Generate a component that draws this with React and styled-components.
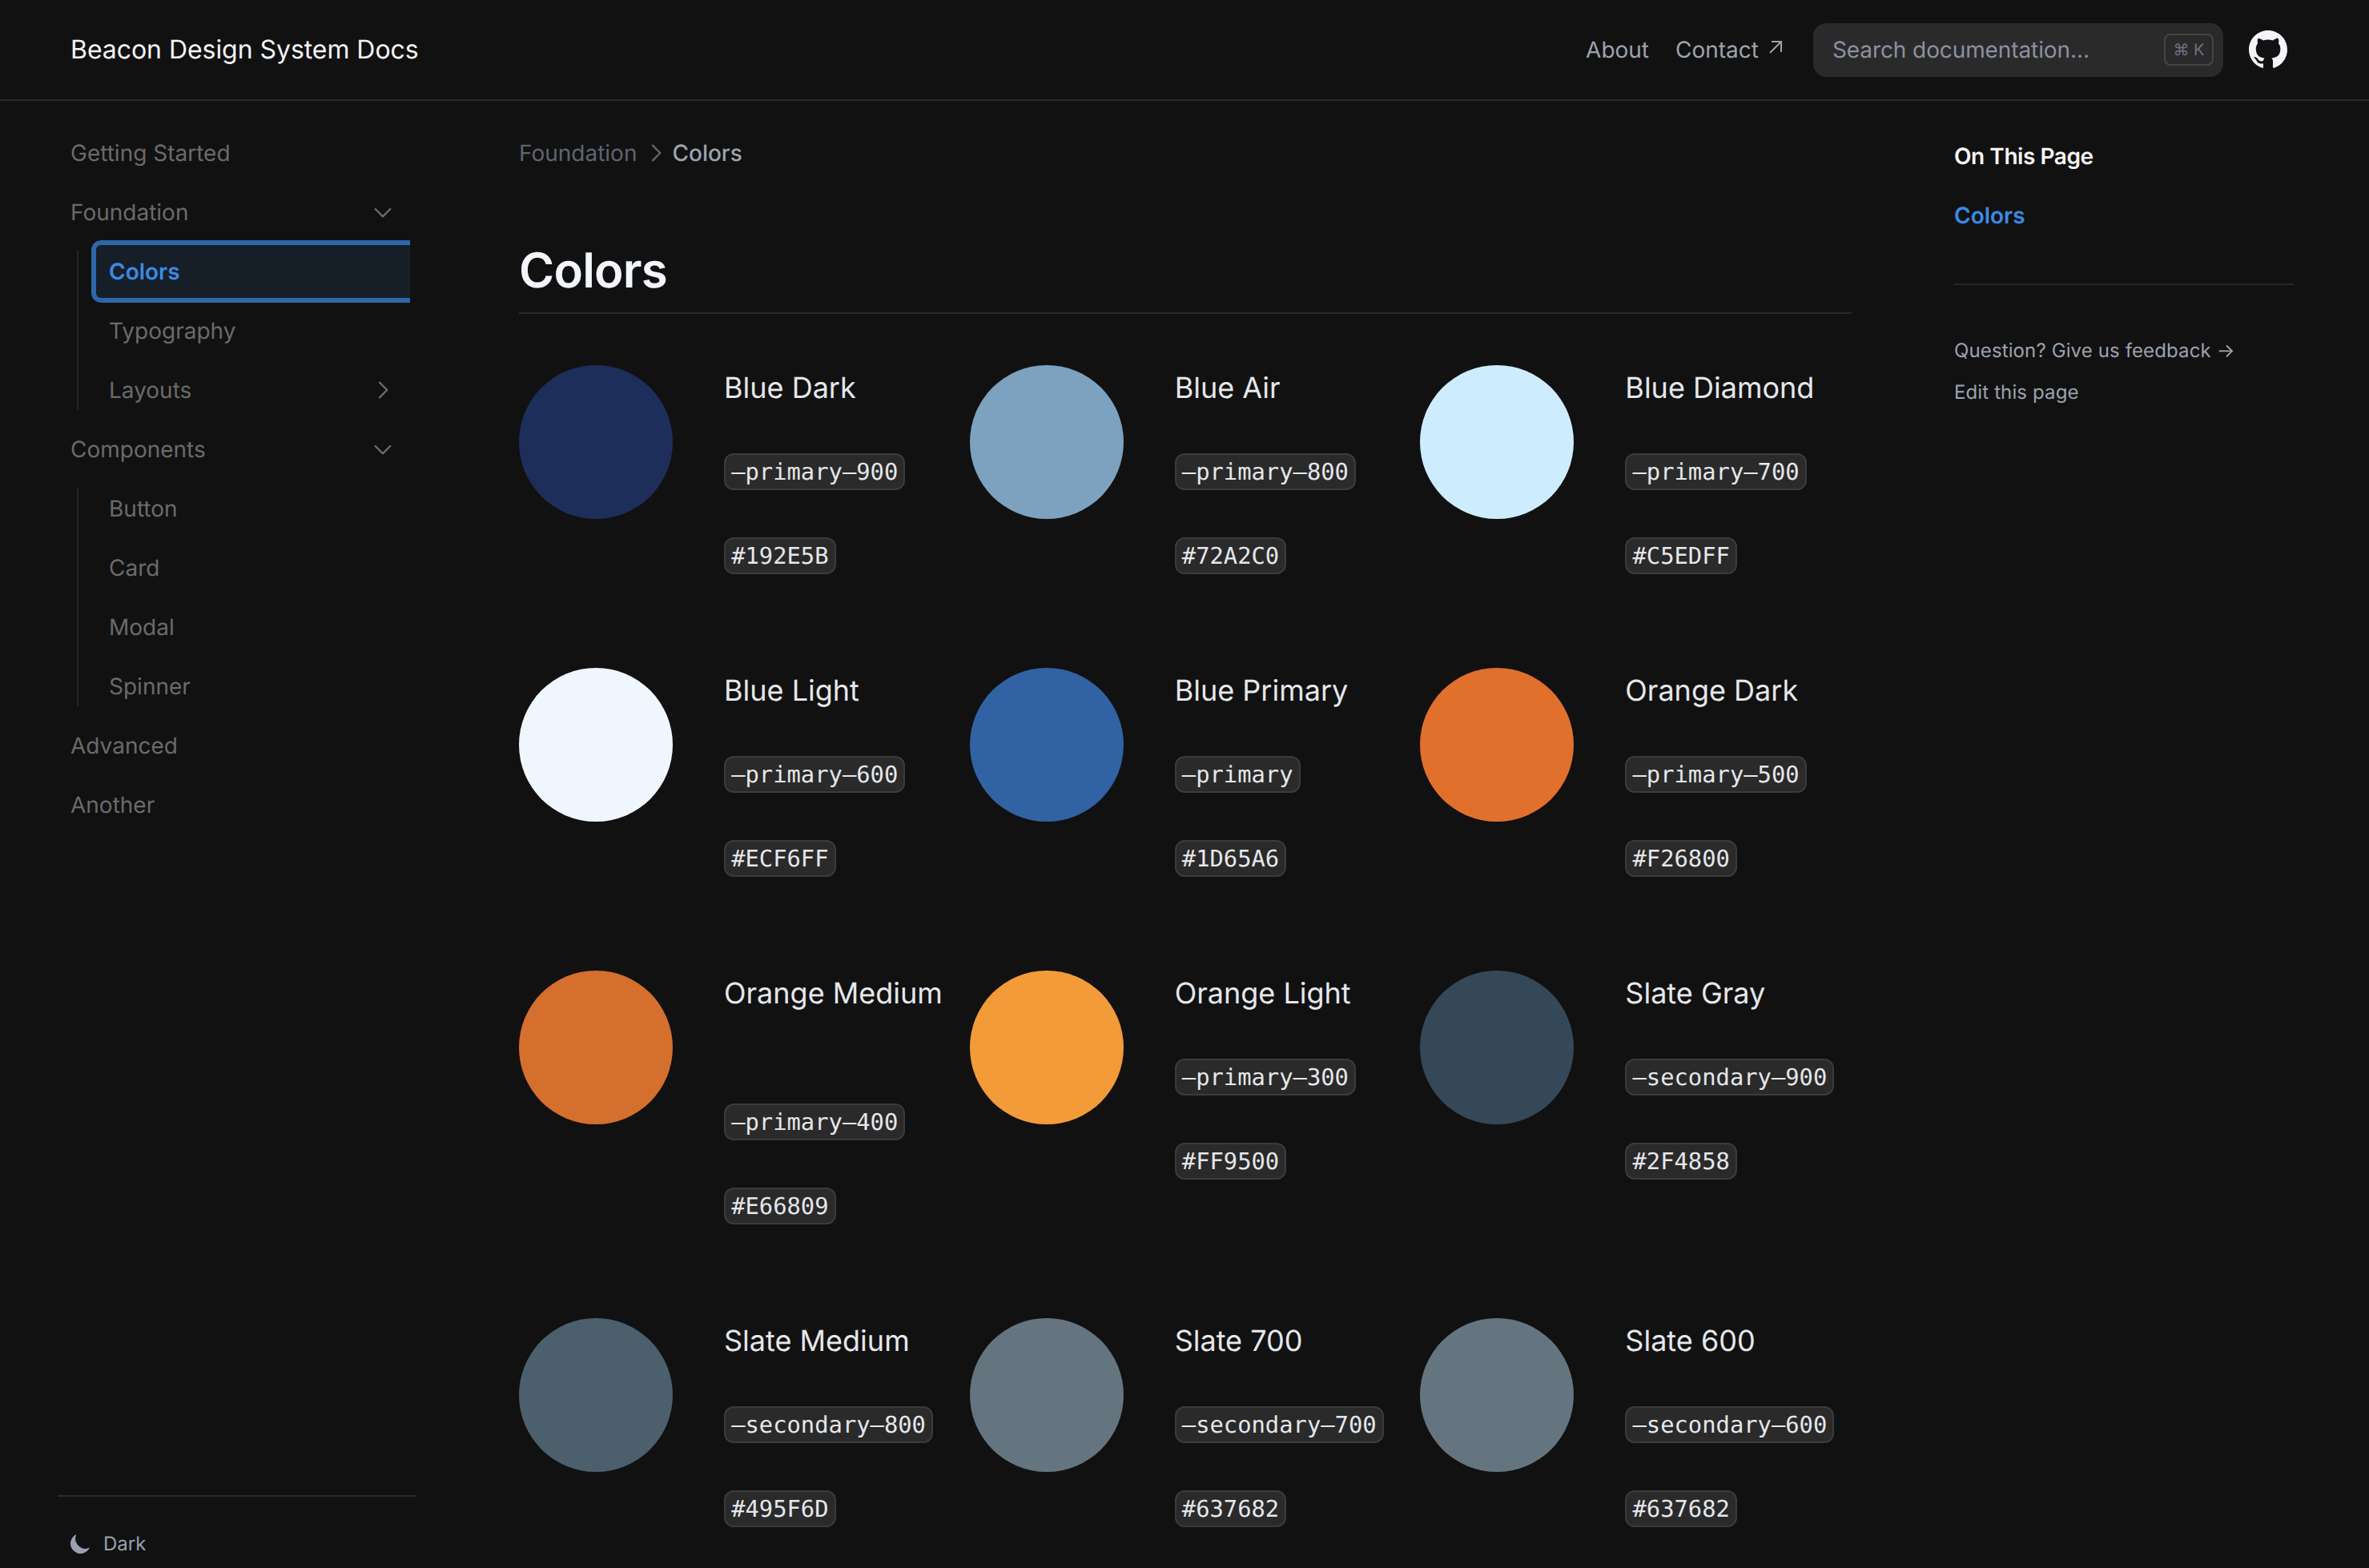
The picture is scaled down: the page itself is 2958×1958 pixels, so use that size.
import React from "react";
import styled, { createGlobalStyle } from "styled-components";

const Global = createGlobalStyle`
  html, body { margin: 0; padding: 0; background: #111111; }
  body { font-family: Inter, "Noto Sans", sans-serif; color: #e5e7eb; text-rendering: geometricPrecision; }
  * { box-sizing: border-box; }
`;
const Page = styled.div`
  height: 1958px; width: 2958px; overflow: hidden; display: flex; flex-direction: column; background: #111111;
`;
const Header = styled.header`
  height: 126px; flex: none; border-bottom: 2px solid #2a2a2a; display: flex; align-items: center;
  padding: 0 102px 0 88px;
`;
const Logo = styled.div`
  font-size: 32px; font-weight: 400; color: #f3f4f6; margin-right: auto; line-height: 48px; letter-spacing: -0.05px;
`;
const TopLink = styled.a`
  font-size: 28px; color: #9ca3af; line-height: 40px; display: flex; align-items: center; margin-right: ${p => p.$mr}px;
`;
const ExternalArrow = styled.svg`
  width: 20px; height: 20px; margin-left: 11px; margin-top: -6px; flex: none;
`;
const Search = styled.div`
  width: 512px; height: 67px; background: #2a2a2a; border-radius: 16px; display: flex; align-items: center;
  padding: 0 12px 0 24px; margin-right: 32px;
`;
const Placeholder = styled.span`
  font-size: 28px; color: #8b90a0; flex: 1; letter-spacing: -0.1px;
`;
const Kbd = styled.kbd`
  width: 62px; height: 40px; border: 2px solid #454545; border-radius: 8px; display: flex; align-items: center;
  justify-content: center; font-family: Inter, "DejaVu Sans", sans-serif; font-size: 20px; color: #6b7280;
`;
const GithubMark = styled.svg`
  width: 48px; height: 48px; flex: none; fill: #f3f5f8;
`;
const Body = styled.div`
  flex: 1; display: flex; min-height: 0;
`;
const Sidebar = styled.aside`
  width: 560px; flex: none; display: flex; flex-direction: column; padding: 32px 40px 0 72px;
`;
const Nav = styled.nav`
  display: flex; flex-direction: column; gap: 8px; flex: 1;
`;
const Row = styled.div`
  height: 66px; flex: none; display: flex; align-items: center; justify-content: space-between;
  padding: 0 26px 0 16px; font-size: 28px; color: #6a6a6a;
`;
const Chevron = styled.svg`
  width: 32px; height: 32px; flex: none; fill: none; stroke: ${p => p.$color || "#6a6a6a"}; stroke-width: 1.8;
  stroke-linecap: round; stroke-linejoin: round; transform: rotate(${p => (p.$down ? 90 : 0)}deg);
`;
const SubList = styled.div`
  position: relative; display: flex; flex-direction: column; gap: 8px; padding-left: 48px;
  &::before {
    content: ""; position: absolute; left: 24px; top: 7px; bottom: 8px; width: 2px; background: #262626;
  }
`;
const SubRow = styled(Row)`
  ${p => p.$active && `
    background: #161e28; color: #3b8ae4; font-weight: 600; border-radius: 6px;
    box-shadow: 0 0 0 6px #2e66a8;
    clip-path: inset(-6px 8px -6px -6px round 12px 0 0 12px);
  `}
`;
const SideFoot = styled.div`
  flex: none; border-top: 2px solid #2a2a2a; height: 91px; padding: 40px 16px 0; display: flex; align-items: flex-start; gap: 17px;
  font-size: 24px; line-height: 38px; color: #9aa0ae;
`;
const Moon = styled.svg`
  width: 24px; height: 24px; fill: #9aa0ae; margin-top: 7px; flex: none;
`;
const Main = styled.main`
  width: 1664px; margin-left: 88px; flex: none; padding-top: 32px;
`;
const Crumbs = styled.div`
  height: 66px; display: flex; align-items: center; font-size: 28px; color: #5f6470;
`;
const CrumbIcon = styled(Chevron)`
  margin: 0 4px 0 8px;
`;
const CrumbCurrent = styled.span`
  color: #9ca3af; font-weight: 500;
`;
const Title = styled.h1`
  margin: 64px 0 0; font-size: 60px; line-height: 100px; font-weight: 600; color: #f3f6fb; letter-spacing: -0.8px;
  border-bottom: 2px solid #2a2a2a; height: 104px;
`;
const Grid = styled.div`
  display: grid; grid-template-columns: repeat(3, 1fr); column-gap: 24px; row-gap: 117px; margin-top: 64px;
`;
const Swatch = styled.div`
  display: flex; gap: 64px; align-items: flex-start; min-width: 0;
`;
const Circle = styled.div`
  width: 192px; height: 192px; border-radius: 50%; flex: none; background: ${p => p.$c};
`;
const Info = styled.div`
  display: flex; flex-direction: column; align-items: flex-start; min-width: 0;
`;
const Name = styled.div`
  font-size: 36px; line-height: 57px; color: #e5e7eb; white-space: nowrap; margin-bottom: ${p => (p.$tall ? 109 : 53)}px;
`;
const Code = styled.code`
  font-family: "DejaVu Sans Mono", "Liberation Mono", monospace; font-size: 28.8px; line-height: 38px; padding: 2px 7.2px;
  height: 46px; border: 2px solid #3b3b3b; border-radius: 12px; background: #2a2a2a; color: #e5e7eb; white-space: nowrap;
  & + & { margin-top: 59px; }
`;
const Toc = styled.aside`
  width: 424px; margin-left: 128px; flex: none; padding-top: 32px; display: flex; flex-direction: column;
`;
const TocHead = styled.div`
  font-size: 28px; font-weight: 600; color: #f5f5f5; line-height: 74px; letter-spacing: -0.45px;
`;
const TocLink = styled.div`
  font-size: 28px; font-weight: 600; color: #3b8ae4; line-height: 74px; padding-bottom: 48px; border-bottom: 2px solid #262626; margin-bottom: 56px;
`;
const TocFoot = styled.div`
  font-size: 24px; color: #9ca3af; line-height: 52px; letter-spacing: 0.12px;
`;

const swatches = [
  ["Blue Dark", "–primary–900", "#192E5B", "#1E2E5A"],
  ["Blue Air", "–primary–800", "#72A2C0", "#7CA2BF"],
  ["Blue Diamond", "–primary–700", "#C5EDFF", "#CDEDFF"],
  ["Blue Light", "–primary–600", "#ECF6FF", "#F0F6FE"],
  ["Blue Primary", "–primary", "#1D65A6", "#3163A4"],
  ["Orange Dark", "–primary–500", "#F26800", "#E0702C"],
  ["Orange Medium", "–primary–400", "#E66809", "#D56F2E", true],
  ["Orange Light", "–primary–300", "#FF9500", "#F39B38"],
  ["Slate Gray", "–secondary–900", "#2F4858", "#354858"],
  ["Slate Medium", "–secondary–800", "#495F6D", "#4C5F6D"],
  ["Slate 700", "–secondary–700", "#637682", "#65757F"],
  ["Slate 600", "–secondary–600", "#637682", "#65757F"],
];

const ChevronIcon = ({ as: As = Chevron, ...p }) => (
  <As viewBox="0 0 24 24" {...p}><path d="M9 5l7 7-7 7" /></As>
);

export default function App() {
  return (
    <Page>
      <Global />
      <Header>
        <Logo>Beacon Design System Docs</Logo>
        <TopLink $mr={33}>About</TopLink>
        <TopLink $mr={37}>
          Contact
          <ExternalArrow viewBox="0 0 20 20" fill="none" stroke="#9ca3af" strokeWidth="2">
            <path d="M3 17L17 3M5 3h12v13" />
          </ExternalArrow>
        </TopLink>
        <Search>
          <Placeholder>Search documentation...</Placeholder>
          <Kbd>⌘ K</Kbd>
        </Search>
        <GithubMark viewBox="0 0 16 16">
          <path d="M8 0C3.58 0 0 3.58 0 8c0 3.54 2.29 6.53 5.47 7.59.4.07.55-.17.55-.38 0-.19-.01-.82-.01-1.49-2.01.37-2.53-.49-2.69-.94-.09-.23-.48-.94-.82-1.13-.28-.15-.68-.52-.01-.53.63-.01 1.08.58 1.23.82.72 1.21 1.87.87 2.33.66.07-.52.28-.87.51-1.07-1.78-.2-3.64-.89-3.64-3.95 0-.87.31-1.59.82-2.15-.08-.2-.36-1.02.08-2.12 0 0 .67-.21 2.2.82.64-.18 1.32-.27 2-.27.68 0 1.36.09 2 .27 1.53-1.04 2.2-.82 2.2-.82.44 1.1.16 1.92.08 2.12.51.56.82 1.27.82 2.15 0 3.07-1.87 3.75-3.65 3.95.29.25.54.73.54 1.48 0 1.07-.01 1.93-.01 2.2 0 .21.15.46.55.38A8.013 8.013 0 0016 8c0-4.42-3.58-8-8-8z" />
        </GithubMark>
      </Header>
      <Body>
        <Sidebar>
          <Nav>
            <Row>Getting Started</Row>
            <Row>Foundation<ChevronIcon $down /></Row>
            <SubList>
              <SubRow $active>Colors</SubRow>
              <SubRow>Typography</SubRow>
              <SubRow>Layouts<ChevronIcon /></SubRow>
            </SubList>
            <Row>Components<ChevronIcon $down /></Row>
            <SubList>
              <SubRow>Button</SubRow>
              <SubRow>Card</SubRow>
              <SubRow>Modal</SubRow>
              <SubRow>Spinner</SubRow>
            </SubList>
            <Row>Advanced</Row>
            <Row>Another</Row>
          </Nav>
          <SideFoot>
            <Moon viewBox="2 2.7 15.3 15.3"><path d="M17.293 13.293A8 8 0 016.707 2.707a8.001 8.001 0 1010.586 10.586z" /></Moon>
            Dark
          </SideFoot>
        </Sidebar>
        <Main>
          <Crumbs>
            Foundation
            <ChevronIcon as={CrumbIcon} $color="#5f6470" />
            <CrumbCurrent>Colors</CrumbCurrent>
          </Crumbs>
          <Title>Colors</Title>
          <Grid>
            {swatches.map(([name, token, hex, shown, tall]) => (
              <Swatch key={name}>
                <Circle $c={shown} />
                <Info>
                  <Name $tall={tall}>{name}</Name>
                  <Code>{token}</Code>
                  <Code>{hex}</Code>
                </Info>
              </Swatch>
            ))}
          </Grid>
        </Main>
        <Toc>
          <TocHead>On This Page</TocHead>
          <TocLink>Colors</TocLink>
          <TocFoot>Question? Give us feedback →</TocFoot>
          <TocFoot>Edit this page</TocFoot>
        </Toc>
      </Body>
    </Page>
  );
}
